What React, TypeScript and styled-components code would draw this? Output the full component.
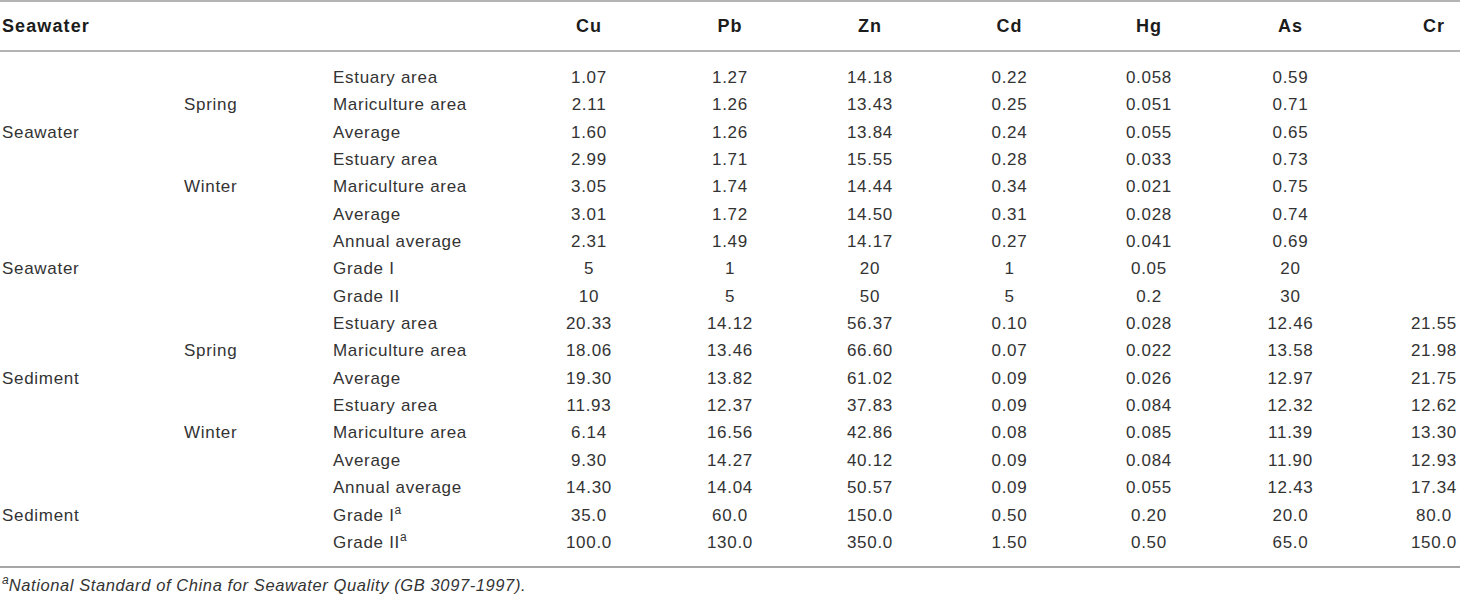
import styled, { createGlobalStyle } from "styled-components";

const GlobalStyle = createGlobalStyle`
    body {
        margin: 0;
        background: #ffffff;
        font-family: "Liberation Sans", Arial, sans-serif;
        color: #333333;
    }
`;

type Row = {
    group?: string;
    season?: string;
    label: string;
    sup?: boolean;
    values: string[];
};

const metals = ["Cu", "Pb", "Zn", "Cd", "Hg", "As", "Cr"];
const metalWidths = [142, 140, 140, 139, 140, 143, 144];

const rows: Row[] = [
    { label: "Estuary area", values: ["1.07", "1.27", "14.18", "0.22", "0.058", "0.59", ""] },
    { season: "Spring", label: "Mariculture area", values: ["2.11", "1.26", "13.43", "0.25", "0.051", "0.71", ""] },
    { group: "Seawater", label: "Average", values: ["1.60", "1.26", "13.84", "0.24", "0.055", "0.65", ""] },
    { label: "Estuary area", values: ["2.99", "1.71", "15.55", "0.28", "0.033", "0.73", ""] },
    { season: "Winter", label: "Mariculture area", values: ["3.05", "1.74", "14.44", "0.34", "0.021", "0.75", ""] },
    { label: "Average", values: ["3.01", "1.72", "14.50", "0.31", "0.028", "0.74", ""] },
    { label: "Annual average", values: ["2.31", "1.49", "14.17", "0.27", "0.041", "0.69", ""] },
    { group: "Seawater", label: "Grade I", values: ["5", "1", "20", "1", "0.05", "20", ""] },
    { label: "Grade II", values: ["10", "5", "50", "5", "0.2", "30", ""] },
    { label: "Estuary area", values: ["20.33", "14.12", "56.37", "0.10", "0.028", "12.46", "21.55"] },
    { season: "Spring", label: "Mariculture area", values: ["18.06", "13.46", "66.60", "0.07", "0.022", "13.58", "21.98"] },
    { group: "Sediment", label: "Average", values: ["19.30", "13.82", "61.02", "0.09", "0.026", "12.97", "21.75"] },
    { label: "Estuary area", values: ["11.93", "12.37", "37.83", "0.09", "0.084", "12.32", "12.62"] },
    { season: "Winter", label: "Mariculture area", values: ["6.14", "16.56", "42.86", "0.08", "0.085", "11.39", "13.30"] },
    { label: "Average", values: ["9.30", "14.27", "40.12", "0.09", "0.084", "11.90", "12.93"] },
    { label: "Annual average", values: ["14.30", "14.04", "50.57", "0.09", "0.055", "12.43", "17.34"] },
    { group: "Sediment", label: "Grade I", sup: true, values: ["35.0", "60.0", "150.0", "0.50", "0.20", "20.0", "80.0"] },
    { label: "Grade II", sup: true, values: ["100.0", "130.0", "350.0", "1.50", "0.50", "65.0", "150.0"] },
];

export default function App() {
    return (
        <>
            <GlobalStyle />
            <Page>
                <Table>
                    <colgroup>
                        <col style={{ width: 182 }} />
                        <col style={{ width: 149 }} />
                        <col style={{ width: 187 }} />
                        {metalWidths.map((w, i) => (
                            <col key={i} style={{ width: w }} />
                        ))}
                    </colgroup>
                    <thead>
                        <tr>
                            <HeadCell align="left">Seawater</HeadCell>
                            <HeadCell align="left" />
                            <HeadCell align="left" />
                            {metals.map((m) => (
                                <HeadCell key={m} align="center">
                                    {m}
                                </HeadCell>
                            ))}
                        </tr>
                    </thead>
                    <Body>
                        {rows.map((row, i) => (
                            <tr key={i}>
                                <Cell align="left">{row.group}</Cell>
                                <Cell align="left">{row.season}</Cell>
                                <Cell align="left">
                                    {row.label}
                                    {row.sup && <Sup>a</Sup>}
                                </Cell>
                                {row.values.map((v, j) => (
                                    <Cell key={j} align="center">
                                        {v}
                                    </Cell>
                                ))}
                            </tr>
                        ))}
                    </Body>
                </Table>
                <Footnote>
                    <Sup>a</Sup>National Standard of China for Seawater Quality (GB 3097-1997).
                </Footnote>
            </Page>
        </>
    );
}

const Page = styled.div`
    width: 1460px;
    overflow: hidden;
`;

const Table = styled.table`
    width: 1506px;
    table-layout: fixed;
    border-collapse: collapse;
    border-top: 2px solid #b4b4b4;
    border-bottom: 2px solid #a6a6a6;
`;

const HeadCell = styled.th<{ align: "left" | "center" }>`
    height: 48px;
    padding: 0 2px;
    text-align: ${(props) => props.align};
    font-size: 18px;
    font-weight: bold;
    letter-spacing: 1.1px;
    color: #1c1c1c;
    border-bottom: 2px solid #b4b4b4;
`;

const Body = styled.tbody`
    tr:first-child td {
        padding-top: 12px;
    }

    tr:last-child td {
        padding-bottom: 10px;
    }
`;

const Cell = styled.td<{ align: "left" | "center" }>`
    padding: 0 2px;
    line-height: 27.35px;
    white-space: nowrap;
    text-align: ${(props) => props.align};
    font-size: 17px;
    letter-spacing: 0.7px;
    color: #333333;
`;

const Sup = styled.sup`
    font-size: 12px;
    letter-spacing: 0;
    line-height: 0;
    vertical-align: 7px;
`;

const Footnote = styled.div`
    padding: 6px 2px 0;
    font-size: 16.5px;
    font-style: italic;
    letter-spacing: 0.6px;
    color: #333333;
    line-height: 22px;
`;
